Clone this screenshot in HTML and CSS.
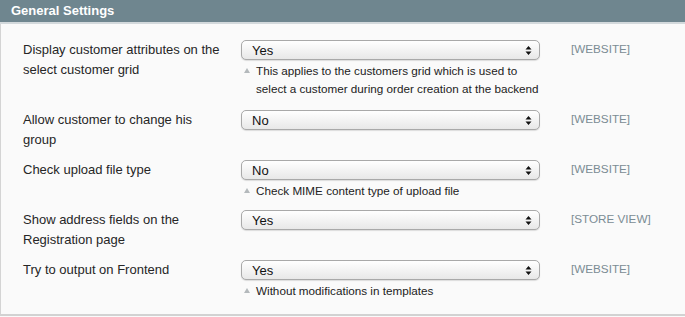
FILE: index.html
```html
<!DOCTYPE html>
<html lang="en">
<head>
    <meta charset="UTF-8">
    <title>General Settings</title>
    <link rel="stylesheet" href="styles.css">
</head>
<body>
<div class="section">
    <div class="section-head">General Settings</div>
    <div class="section-body">
        <table class="form-list">
            <tr class="first">
                <td class="label">Display customer attributes on the select customer grid</td>
                <td class="value">
                    <select><option>Yes</option><option>No</option></select>
                    <p class="note">This applies to the customers grid which is used to select a customer during order creation at the backend</p>
                </td>
                <td class="scope">[WEBSITE]</td>
            </tr>
            <tr>
                <td class="label">Allow customer to change his group</td>
                <td class="value">
                    <select><option>No</option><option>Yes</option></select>
                </td>
                <td class="scope">[WEBSITE]</td>
            </tr>
            <tr>
                <td class="label">Check upload file type</td>
                <td class="value">
                    <select><option>No</option><option>Yes</option></select>
                    <p class="note">Check MIME content type of upload file</p>
                </td>
                <td class="scope">[WEBSITE]</td>
            </tr>
            <tr>
                <td class="label">Show address fields on the Registration page</td>
                <td class="value">
                    <select><option>Yes</option><option>No</option></select>
                </td>
                <td class="scope">[STORE VIEW]</td>
            </tr>
            <tr>
                <td class="label">Try to output on Frontend</td>
                <td class="value">
                    <select><option>Yes</option><option>No</option></select>
                    <p class="note">Without modifications in templates</p>
                </td>
                <td class="scope">[WEBSITE]</td>
            </tr>
        </table>
    </div>
</div>
</body>
</html>
```
FILE: styles.css
```css
body {
    margin: 0;
    font-family: "Liberation Sans", Arial, sans-serif;
    background: #fafafa;
    color: #262626;
}
.section-head {
    background: #6f868f;
    color: #fff;
    font-weight: bold;
    font-size: 13px;
    height: 22px;
    line-height: 22px;
    padding-left: 11px;
    border-bottom: 2px solid #d3d9dc;
}
.section-body {
    background: #fafafa;
    border-left: 1px solid #d4d4d4;
    border-bottom: 2px solid #d2d2d2;
    padding: 16px 0 4px 0;
}
.form-list {
    border-collapse: collapse;
}
.form-list td {
    vertical-align: top;
    padding: 0 0 10px 0;
}
.form-list tr.first td {
    padding-bottom: 12px;
}
.label {
    width: 200px;
    padding-left: 22px !important;
    padding-right: 18px !important;
    font-size: 13px;
    line-height: 20px;
}
.value {
    width: 299px;
}
select {
    -webkit-appearance: none;
    appearance: none;
    display: block;
    width: 299px;
    height: 20px;
    margin: 0;
    padding: 0 20px 0 10px;
    font-family: "Liberation Sans", Arial, sans-serif;
    font-size: 13px;
    color: #111;
    border: 1px solid #a9a9a9;
    border-radius: 5px;
    background-color: #efefef;
    background-image: url("data:image/svg+xml;utf8,<svg xmlns='http://www.w3.org/2000/svg' width='7' height='9'><path d='M3.5 0L6.5 3.5H0.5Z M3.5 9L0.5 5.5H6.5Z' fill='%23111'/></svg>"), linear-gradient(#ffffff, #e8e8e8);
    background-repeat: no-repeat, no-repeat;
    background-position: right 7px center, 0 0;
    box-shadow: 0 1px 1px rgba(0, 0, 0, 0.12);
}
.note {
    margin: 2px 0 0 0;
    padding-left: 15px;
    font-size: 11.7px;
    line-height: 18px;
    color: #222;
    position: relative;
}
.note:before {
    content: "";
    position: absolute;
    left: 3px;
    top: 6px;
    border-left: 3px solid transparent;
    border-right: 3px solid transparent;
    border-bottom: 5px solid #b4b9bc;
}
.scope {
    padding-left: 31px !important;
    font-size: 11.7px;
    line-height: 18px;
    color: #7b8c94;
    white-space: nowrap;
}
```
